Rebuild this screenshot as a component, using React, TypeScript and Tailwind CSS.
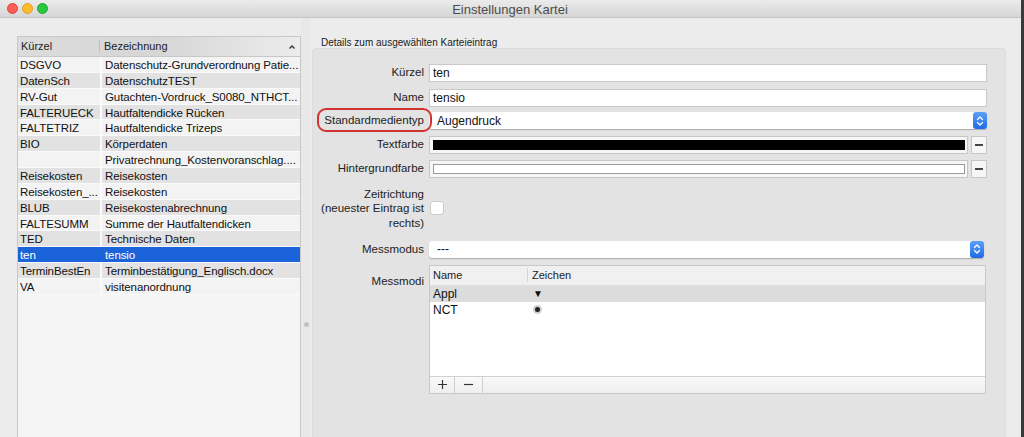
import React from "react";

const rows: [string, string][] = [
  ["DSGVO", "Datenschutz-Grundverordnung Patie..."],
  ["DatenSch", "DatenschutzTEST"],
  ["RV-Gut", "Gutachten-Vordruck_S0080_NTHCT..."],
  ["FALTERUECK", "Hautfaltendicke Rücken"],
  ["FALTETRIZ", "Hautfaltendicke Trizeps"],
  ["BIO", "Körperdaten"],
  ["", "Privatrechnung_Kostenvoranschlag...."],
  ["Reisekosten", "Reisekosten"],
  ["Reisekosten_...", "Reisekosten"],
  ["BLUB", "Reisekostenabrechnung"],
  ["FALTESUMM", "Summe der Hautfaltendicken"],
  ["TED", "Technische Daten"],
  ["ten", "tensio"],
  ["TerminBestEn", "Terminbestätigung_Englisch.docx"],
  ["VA", "visitenanordnung"],
];

function Stepper() {
  return (
    <div className="w-[14px] h-[17px] rounded-[3px] bg-gradient-to-b from-[#5aa0f8] to-[#1f6ae6] flex items-center justify-center">
      <svg width="8" height="12" viewBox="0 0 8 12" fill="none" stroke="white" strokeWidth="1.3" strokeLinecap="round" strokeLinejoin="round">
        <path d="M1.5 4.5 L4 2 L6.5 4.5" />
        <path d="M1.5 7.5 L4 10 L6.5 7.5" />
      </svg>
    </div>
  );
}

function Label({ children }: { children: React.ReactNode }) {
  return <div className="w-[116px] shrink-0 text-right pr-[5px] text-[11.5px] text-[#222] whitespace-nowrap">{children}</div>;
}

export default function App() {
  return (
    <div className="w-[1024px] h-[437px] overflow-hidden bg-[#3a3a3a] flex" style={{ fontFamily: '"Liberation Sans", Arial, sans-serif' }}>
      <div className="w-[1021px] h-full flex flex-col bg-[#ececec]">
        {/* Title bar */}
        <div className="h-[18px] shrink-0 relative flex items-center bg-gradient-to-b from-[#ebebeb] to-[#d6d6d6] border-b border-[#c4c4c4]">
          <div className="flex gap-[4px] pl-[7px] items-center">
            <div className="w-[11px] h-[11px] rounded-full bg-[#fc5f57] border border-[#e0443e]" />
            <div className="w-[11px] h-[11px] rounded-full bg-[#fdbc2e] border border-[#dea123]" />
            <div className="w-[11px] h-[11px] rounded-full bg-[#28c840] border border-[#1aab29]" />
          </div>
          <div className="flex-1 text-center text-[13px] text-[#4c4c4c] pr-[49px] pt-[2px]">Einstellungen Kartei</div>
        </div>

        <div className="flex-1 flex min-h-0">
          {/* Left table */}
          <div className="w-[301px] shrink-0 pl-[17px] pt-[18px] flex">
            <div className="w-[284px] flex flex-col border border-[#c8c8c8] border-b-0 bg-[#f5f5f5]">
              <div className="h-[20px] shrink-0 flex items-center bg-gradient-to-r from-[#dcdcdc] via-[#d6d6d6] to-[#ececec] border-b border-[#c8c8c8] text-[11px] text-[#222] font-medium">
                <div className="w-[82px] pl-[3px] border-r border-[#c0c0c0] h-[13px] leading-[13px]">Kürzel</div>
                <div className="flex-1 pl-[4px]">Bezeichnung</div>
                <svg width="8" height="6" viewBox="0 0 8 6" className="mr-[4px]" fill="none" stroke="#333" strokeWidth="1.3">
                  <path d="M1.5 4.5 L4 2 L6.5 4.5" />
                </svg>
              </div>
              <div className="flex flex-col">
                {rows.map(([k, b], i) => {
                  const sel = k === "ten";
                  const bg = sel ? "bg-[#1b63d8] text-white" : i % 2 === 0 ? "bg-[#f3f3f3] text-[#111]" : "bg-[#e2e2e2] text-[#111]";
                  return (
                    <div key={i} className={`h-[15.87px] flex text-[11.5px] leading-[16.5px] tracking-[-0.1px] border-b border-[#fafafa] ${sel ? "bg-[#1b63d8]" : ""}`}>
                      <div className={`w-[82px] pl-[2px] whitespace-nowrap overflow-hidden ${bg}`}>{k}</div>
                      <div className={`w-[2px] ${sel ? "bg-[#1b63d8]" : "bg-[#fafafa]"}`} />
                      <div className={`flex-1 pl-[3px] whitespace-nowrap overflow-hidden ${bg}`}>{b}</div>
                    </div>
                  );
                })}
              </div>
            </div>
          </div>

          {/* Splitter */}
          <div className="w-[10px] shrink-0 bg-[#e8e8e8] flex items-start justify-center pt-[304px]">
            <div className="w-[5px] h-[5px] rounded-full bg-[#c2c2c2]" />
          </div>

          {/* Right pane */}
          <div className="flex-1 pl-[1px] pt-[19px] flex flex-col">
            <div className="text-[10px] text-[#222] pl-[9px] h-[11px] leading-[11px]">Details zum ausgewählten Karteieintrag</div>
            <div className="w-[694px] flex-1 bg-[#e3e3e3] rounded-t-[4px] border border-[#dcdcdc] border-b-0 pt-[15px] pr-[18px] flex flex-col">
              {/* Kürzel */}
              <div className="flex items-center h-[18px]">
                <Label>Kürzel</Label>
                <div className="flex-1 h-[18px] bg-white border border-[#c9c9c9] text-[12px] leading-[16px] pl-[3px] text-[#111]">ten</div>
              </div>
              {/* Name */}
              <div className="flex items-center h-[18px] mt-[7px]">
                <Label>Name</Label>
                <div className="flex-1 h-[18px] bg-white border border-[#c9c9c9] text-[12px] leading-[16px] pl-[3px] text-[#111]">tensio</div>
              </div>
              {/* Standardmedientyp */}
              <div className="flex items-center h-[17px] mt-[5px] relative">
                <div className="absolute left-[4px] top-[-4px] w-[115px] h-[24px] rounded-[9px] border-2 border-[#d2332e]" />
                <Label>Standardmedientyp</Label>
                <div className="flex-1 h-[17px] bg-white rounded-[3px] shadow-[0_1px_1px_rgba(0,0,0,0.25)] flex items-center">
                  <div className="flex-1 text-[12px] pl-[8px] text-[#111]">Augendruck</div>
                  <Stepper />
                </div>
              </div>
              {/* Textfarbe */}
              <div className="flex items-center h-[18px] mt-[7px]">
                <Label>Textfarbe</Label>
                <div className="flex-1 h-[18px] bg-[#f6f6f6] border border-[#c6c6c6] p-[3px] pr-[2px]">
                  <div className="w-full h-full bg-black" />
                </div>
                <div className="w-[16px] h-[18px] ml-[3px] bg-[#f6f6f6] border border-[#c6c6c6] flex items-center justify-center">
                  <div className="w-[8px] h-[1.5px] bg-[#444]" />
                </div>
              </div>
              {/* Hintergrundfarbe */}
              <div className="flex items-center h-[18px] mt-[6px]">
                <Label>Hintergrundfarbe</Label>
                <div className="flex-1 h-[18px] bg-[#f6f6f6] border border-[#c6c6c6] p-[3px] pr-[2px]">
                  <div className="w-full h-full bg-white border border-[#9a9a9a]" />
                </div>
                <div className="w-[16px] h-[18px] ml-[3px] bg-[#f6f6f6] border border-[#c6c6c6] flex items-center justify-center">
                  <div className="w-[8px] h-[1.5px] bg-[#444]" />
                </div>
              </div>
              {/* Zeitrichtung */}
              <div className="flex items-center mt-[9px]">
                <div className="w-[116px] shrink-0 text-right pr-[5px] text-[11.5px] leading-[14.3px] text-[#222] whitespace-nowrap">
                  Zeitrichtung<br />(neuester Eintrag ist<br />rechts)
                </div>
                <div className="w-[12px] h-[12px] ml-[2px] bg-white rounded-[2px] shadow-[0_0_0_0.5px_rgba(0,0,0,0.2)]" />
              </div>
              {/* Messmodus */}
              <div className="flex items-center h-[17px] mt-[11px] pr-[3px]">
                <Label>Messmodus</Label>
                <div className="flex-1 h-[17px] bg-white rounded-[3px] shadow-[0_1px_1px_rgba(0,0,0,0.25)] flex items-center">
                  <div className="flex-1 text-[12px] pl-[8px] text-[#111]">---</div>
                  <Stepper />
                </div>
              </div>
              {/* Messmodi */}
              <div className="flex items-start mt-[7px] pr-[1px]">
                <div className="w-[116px] shrink-0 text-right pr-[5px] text-[11.5px] text-[#222] pt-[8px]">Messmodi</div>
                <div className="flex-1 h-[129px] border border-[#c8c8c8] bg-white flex flex-col">
                  <div className="h-[20px] shrink-0 bg-[#f0f0f0] border-b border-[#dedede] flex items-center text-[11px] text-[#222]">
                    <div className="w-[98px] pl-[3px] border-r border-[#d4d4d4] h-[14px] leading-[14px]">Name</div>
                    <div className="pl-[4px]">Zeichen</div>
                  </div>
                  <div className="h-[16px] flex items-center bg-[#dcdcdc] text-[12px] text-[#111]">
                    <div className="w-[98px] pl-[3px]">Appl</div>
                    <div className="pl-[5px] text-[10px]">▼</div>
                  </div>
                  <div className="h-[16px] flex items-center text-[12px] text-[#111]">
                    <div className="w-[98px] pl-[3px]">NCT</div>
                    <div className="pl-[5px] flex items-center">
                      <div className="w-[9px] h-[9px] rounded-full bg-[#d0d0d0] flex items-center justify-center">
                        <div className="w-[5px] h-[5px] rounded-full bg-[#222]" />
                      </div>
                    </div>
                  </div>
                  <div className="flex-1" />
                  <div className="h-[17px] shrink-0 border-t border-[#d0d0d0] bg-gradient-to-b from-[#fafafa] to-[#efefef] flex">
                    <div className="w-[25px] border-r border-[#d0d0d0] flex items-center justify-center">
                      <svg width="11" height="11" viewBox="0 0 11 11" stroke="#333" strokeWidth="1.2"><path d="M5.5 1 V10 M1 5.5 H10" /></svg>
                    </div>
                    <div className="w-[28px] border-r border-[#d0d0d0] flex items-center justify-center">
                      <svg width="11" height="11" viewBox="0 0 11 11" stroke="#333" strokeWidth="1.2"><path d="M1 5.5 H10" /></svg>
                    </div>
                  </div>
                </div>
              </div>
            </div>
          </div>
          <div className="w-[14px] shrink-0" />
        </div>
      </div>
    </div>
  );
}
